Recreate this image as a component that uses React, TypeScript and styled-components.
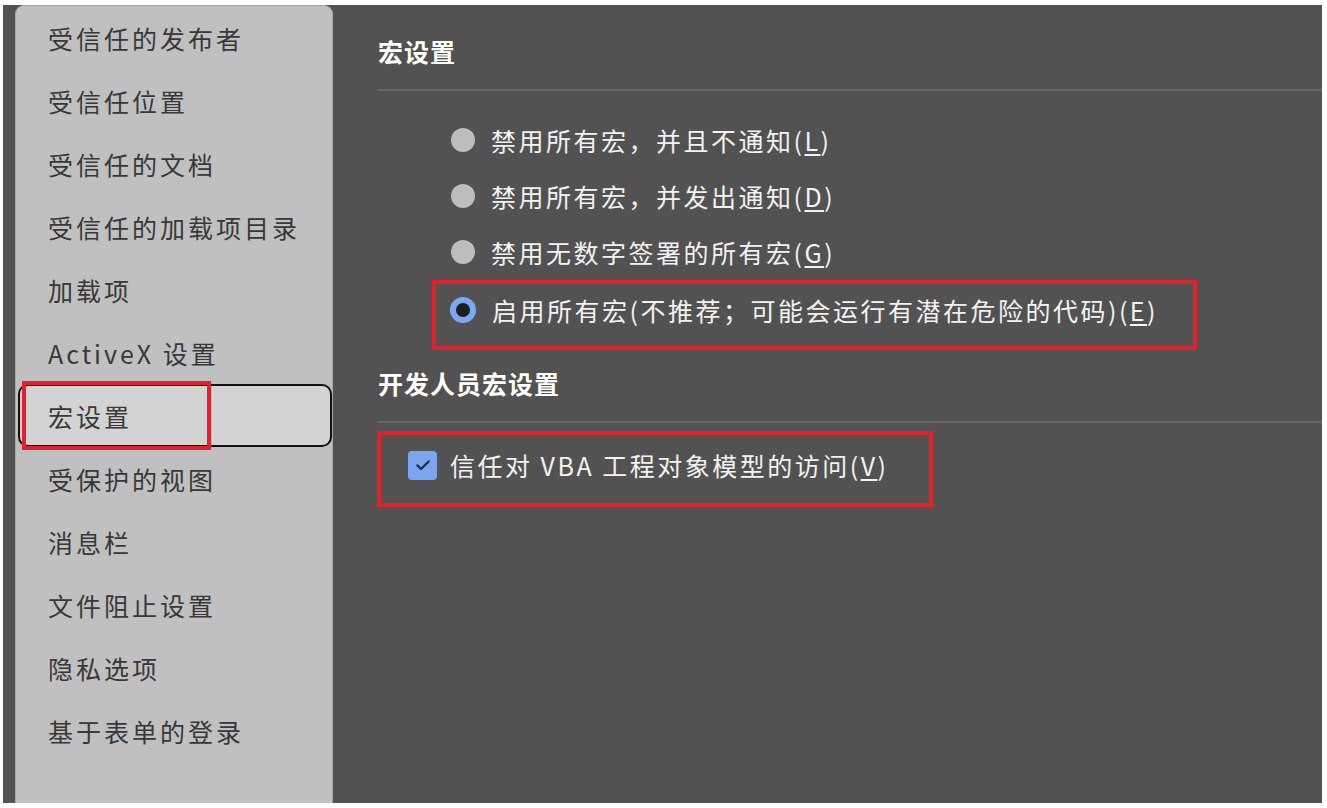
import styled, { createGlobalStyle } from 'styled-components';

const GlobalStyle = createGlobalStyle`
  html, body {
    margin: 0;
    padding: 0;
    background: #fff;
  }
  body {
    font-family: "Noto Sans CJK SC", "Noto Sans", sans-serif;
  }
`;

const navItems = [
  '受信任的发布者',
  '受信任位置',
  '受信任的文档',
  '受信任的加载项目录',
  '加载项',
  'ActiveX 设置',
  '宏设置',
  '受保护的视图',
  '消息栏',
  '文件阻止设置',
  '隐私选项',
  '基于表单的登录',
];

const macroOptions = [
  { pre: '禁用所有宏，并且不通知(', key: 'L' },
  { pre: '禁用所有宏，并发出通知(', key: 'D' },
  { pre: '禁用无数字签署的所有宏(', key: 'G' },
];

const App = () => {
  const selected = '宏设置';

  return (
    <Page>
      <GlobalStyle />
      <Frame>
        <Sidebar>
          {navItems.map(label => (
            <NavItem key={label} $active={label === selected}>
              {label}
              {label === selected && <MarkBox />}
            </NavItem>
          ))}
        </Sidebar>
        <Main>
          <SectionTitle>宏设置</SectionTitle>
          <Divider />
          <OptionList>
            {macroOptions.map(opt => (
              <OptionRow key={opt.key}>
                <Radio />
                <OptionText>
                  {opt.pre}
                  <u>{opt.key}</u>)
                </OptionText>
              </OptionRow>
            ))}
          </OptionList>
          <Highlight $width={765} $pad="0 0 10px 14px">
            <OptionRow $flat>
              <Radio $checked />
              <OptionText>
                启用所有宏(不推荐；可能会运行有潜在危险的代码)(<u>E</u>)
              </OptionText>
            </OptionRow>
          </Highlight>
          <SectionTitle $gap={15}>开发人员宏设置</SectionTitle>
          <Divider />
          <Highlight $width={556} $pad="0 0 8px 27px" $offset={0} $top={8}>
            <CheckRow>
              <CheckBox>
                <svg width="20" height="20" viewBox="0 0 16 16">
                  <path
                    d="M3.5 8.3 L6.5 11.2 L12.5 5.2"
                    fill="none"
                    stroke="#1f2a44"
                    strokeWidth="1.8"
                    strokeLinecap="round"
                    strokeLinejoin="round"
                  />
                </svg>
              </CheckBox>
              <OptionText>
                信任对 VBA 工程对象模型的访问(<u>V</u>)
              </OptionText>
            </CheckRow>
          </Highlight>
        </Main>
      </Frame>
    </Page>
  );
};

export default App;

const Page = styled.div`
  padding: 5px 5px 5px 3px;
  height: 808px;
  box-sizing: border-box;
  background: #fff;
`;

const Frame = styled.div`
  display: flex;
  height: 100%;
  background: #525252;
  padding-left: 12px;
  box-sizing: border-box;
`;

const Sidebar = styled.div`
  width: 318px;
  flex-shrink: 0;
  background: #c0c0c0;
  border: 1px solid #a8a8a8;
  border-bottom: none;
  border-radius: 9px 9px 0 0;
  box-sizing: border-box;
  display: flex;
  flex-direction: column;
`;

const NavItem = styled.div<{ $active?: boolean }>`
  position: relative;
  height: 63px;
  display: flex;
  align-items: center;
  box-sizing: border-box;
  margin: 0 0 0 2px;
  padding-left: ${({ $active }) => ($active ? '28px' : '30px')};
  font-size: 25px;
  letter-spacing: 3px;
  color: #383838;
  background: ${({ $active }) => ($active ? '#d3d3d3' : 'transparent')};
  border: ${({ $active }) => ($active ? '2px solid #111' : 'none')};
  border-radius: 10px;
`;

const MarkBox = styled.div`
  position: absolute;
  left: 2px;
  top: -5px;
  width: 189px;
  height: 69px;
  border: 4px solid #e3202b;
  box-sizing: border-box;
  pointer-events: none;
`;

const Main = styled.div`
  flex: 1;
  display: flex;
  flex-direction: column;
  padding-left: 45px;
  padding-top: 28px;
  color: #f2f2f2;
`;

const SectionTitle = styled.div<{ $gap?: number }>`
  height: 36px;
  line-height: 36px;
  margin-top: ${({ $gap }) => $gap ?? 0}px;
  font-size: 25px;
  font-weight: 700;
  letter-spacing: 1px;
  color: #fff;
`;

const Divider = styled.div`
  height: 2px;
  background: #666;
  margin-top: 20px;
`;

const OptionList = styled.div`
  display: flex;
  flex-direction: column;
  padding-left: 73px;
  padding-top: 21px;
`;

const OptionRow = styled.div<{ $flat?: boolean }>`
  display: flex;
  align-items: center;
  gap: 16px;
  height: ${({ $flat }) => ($flat ? '52px' : '56px')};
`;

const Radio = styled.div<{ $checked?: boolean }>`
  width: ${({ $checked }) => ($checked ? '26px' : '24px')};
  height: ${({ $checked }) => ($checked ? '26px' : '24px')};
  border-radius: 50%;
  box-sizing: border-box;
  flex-shrink: 0;
  background: ${({ $checked }) => ($checked ? '#1e1e1e' : '#bdbdbd')};
  border: ${({ $checked }) => ($checked ? '6px solid #7aa8f2' : 'none')};
`;

const OptionText = styled.span`
  font-size: 25px;
  letter-spacing: 2.5px;
  color: #f2f2f2;
  white-space: nowrap;

  u {
    text-underline-offset: 3px;
  }
`;

const Highlight = styled.div<{
  $width: number;
  $pad: string;
  $offset?: number;
  $top?: number;
}>`
  width: ${({ $width }) => $width}px;
  margin-left: ${({ $offset }) => ($offset ?? 55) - 1}px;
  margin-top: ${({ $top }) => $top ?? 0}px;
  padding: ${({ $pad }) => $pad};
  border: 4px solid #e3202b;
  box-sizing: border-box;
`;

const CheckRow = styled.div`
  display: flex;
  align-items: center;
  gap: 13px;
  height: 60px;
`;

const CheckBox = styled.div`
  width: 29px;
  height: 29px;
  border-radius: 4px;
  background: #7aa6ef;
  display: flex;
  align-items: center;
  justify-content: center;
  flex-shrink: 0;
`;
